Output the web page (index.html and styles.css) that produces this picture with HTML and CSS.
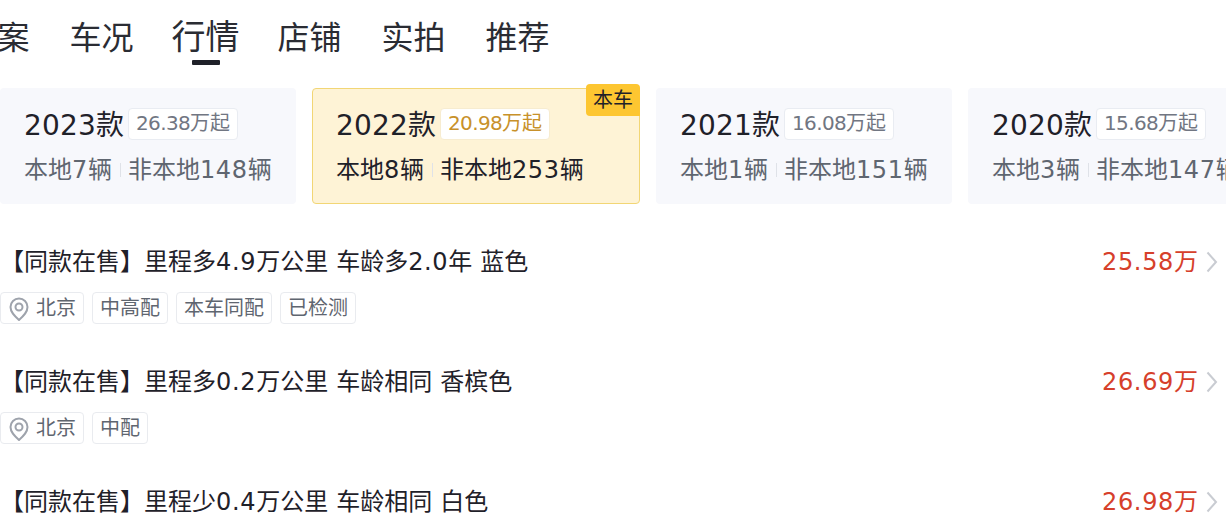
FILE: index.html
```html
<!DOCTYPE html>
<html lang="zh">
<head>
<meta charset="utf-8">
<title>行情</title>
<link rel="stylesheet" href="styles.css">
</head>
<body>
<nav class="tabs">
  <span class="tab">档案</span>
  <span class="tab">车况</span>
  <span class="tab active">行情</span>
  <span class="tab">店铺</span>
  <span class="tab">实拍</span>
  <span class="tab">推荐</span>
</nav>
<section class="years">
  <div class="year">
    <div class="year-head"><span class="year-name"><b class="n28">2023</b>款</span><span class="year-price"><b class="n20">26.38</b>万起</span></div>
    <div class="year-count"><span>本地<b class="n24">7</b>辆</span><i class="sep"></i><span>非本地<b class="n24">148</b>辆</span></div>
  </div>
  <div class="year current">
    <span class="badge">本车</span>
    <div class="year-head"><span class="year-name"><b class="n28">2022</b>款</span><span class="year-price"><b class="n20">20.98</b>万起</span></div>
    <div class="year-count"><span>本地<b class="n24">8</b>辆</span><i class="sep"></i><span>非本地<b class="n24">253</b>辆</span></div>
  </div>
  <div class="year">
    <div class="year-head"><span class="year-name"><b class="n28">2021</b>款</span><span class="year-price"><b class="n20">16.08</b>万起</span></div>
    <div class="year-count"><span>本地<b class="n24">1</b>辆</span><i class="sep"></i><span>非本地<b class="n24">151</b>辆</span></div>
  </div>
  <div class="year">
    <div class="year-head"><span class="year-name"><b class="n28">2020</b>款</span><span class="year-price"><b class="n20">15.68</b>万起</span></div>
    <div class="year-count"><span>本地<b class="n24">3</b>辆</span><i class="sep"></i><span>非本地<b class="n24">147</b>辆</span></div>
  </div>
</section>
<section class="list">
  <article class="item">
    <div class="item-top">
      <span class="item-title">【同款在售】里程多<b class="n24">4.9</b>万公里 车龄多<b class="n24">2.0</b>年 蓝色</span>
      <span class="item-price"><b class="n24">25.58</b>万<svg class="chev" viewBox="0 0 12 22"><path d="M1.500 1.500 10 11 1.500 20.500"/></svg></span>
    </div>
    <div class="tags">
      <span class="tag"><svg class="pin" viewBox="0 0 20 24"><path d="M10 23C5 18.500 1.500 15 1.500 10a8.500 8.500 0 0 1 17 0c0 5-3.500 8.500-8.500 13Z"/><circle cx="10" cy="10" r="3.500"/></svg>北京</span>
      <span class="tag">中高配</span>
      <span class="tag">本车同配</span>
      <span class="tag">已检测</span>
    </div>
  </article>
  <article class="item">
    <div class="item-top">
      <span class="item-title">【同款在售】里程多<b class="n24">0.2</b>万公里 车龄相同 香槟色</span>
      <span class="item-price"><b class="n24">26.69</b>万<svg class="chev" viewBox="0 0 12 22"><path d="M1.500 1.500 10 11 1.500 20.500"/></svg></span>
    </div>
    <div class="tags">
      <span class="tag"><svg class="pin" viewBox="0 0 20 24"><path d="M10 23C5 18.500 1.500 15 1.500 10a8.500 8.500 0 0 1 17 0c0 5-3.500 8.500-8.500 13Z"/><circle cx="10" cy="10" r="3.500"/></svg>北京</span>
      <span class="tag">中配</span>
    </div>
  </article>
  <article class="item">
    <div class="item-top">
      <span class="item-title">【同款在售】里程少<b class="n24">0.4</b>万公里 车龄相同 白色</span>
      <span class="item-price"><b class="n24">26.98</b>万<svg class="chev" viewBox="0 0 12 22"><path d="M1.500 1.500 10 11 1.500 20.500"/></svg></span>
    </div>
  </article>
</section>
</body>
</html>
```
FILE: styles.css
```css
* { box-sizing: border-box; }
html, body { margin: 0; height: 100%; }
body {
  width: 1226px;
  height: 518px;
  overflow: hidden;
  background: #fff;
  color: #1f2129;
  font-family: "DejaVu Sans", "Noto Sans CJK SC", sans-serif;
}
b { font-weight: 400; }
.n20 { letter-spacing: -0.65px; }
.n24 { letter-spacing: 0.66px; }
.n28 { letter-spacing: 0.19px; }
.tabs {
  display: flex;
  align-items: baseline;
  gap: 40px;
  height: 88px;
  margin-left: -34.5px;
  padding-top: 14px;
  font-size: 32px;
  line-height: 46px;
  color: #2a2c33;
}
.tab { position: relative; height: 46px; white-space: nowrap; }
.active { margin: 0 -2px; font-size: 34px; }
.active::after {
  content: "";
  position: absolute;
  left: 20.5px;
  top: 46px;
  width: 28px;
  height: 5px;
  border-radius: 1px;
  background: #1f2129;
}
.years { display: flex; gap: 16px; height: 116px; }
.year {
  position: relative;
  flex: none;
  width: 296px;
  height: 116px;
  padding: 20px 0 0 24px;
  border-radius: 4px;
  background: #f7f8fc;
  color: #5f6670;
  white-space: nowrap;
}
.current {
  width: 328px;
  background: #fef3d6;
  border: 1px solid #f2d675;
  padding: 19px 0 0 23px;
  color: #1f2129;
}
.year:last-child { width: 320px; }
.year-head { display: flex; align-items: center; height: 32px; gap: 4px; }
.year-name { font-size: 28px; line-height: 32px; padding-top: 4px; color: #1f2129; }
.year-price {
  height: 32px;
  padding: 0 7px;
  border: 1px solid #e9ecf2;
  border-radius: 4px;
  background: #fff;
  font-size: 20px;
  line-height: 28px;
  color: #717682;
}
.current .year-price { color: #c8912a; border-color: #f7ecd0; }
.year-count { display: flex; align-items: center; height: 34px; margin-top: 13px; font-size: 24px; line-height: 34px; }
.sep { width: 1px; height: 14px; margin: 0 7px 0 8px; background: #dfe2e8; }
.badge {
  position: absolute;
  right: -1px;
  top: -5px;
  width: 54px;
  height: 32px;
  border-radius: 4px 4px 0 4px;
  background: #fdc631;
  font-size: 20px;
  line-height: 32px;
  text-align: center;
  color: #1f2129;
}
.list { display: flex; flex-direction: column; gap: 0; }
.item { height: 120px; padding-top: 38px; }
.item-top { display: flex; justify-content: space-between; align-items: center; height: 40px; }
.item-title { font-size: 24px; line-height: 40px; word-spacing: 0.37px; color: #1f2129; white-space: nowrap; }
.item-price { display: flex; align-items: center; font-size: 24px; line-height: 40px; color: #d6402b; }
.chev { width: 12px; height: 22px; margin: 0 8px; fill: none; stroke: #c9ccd2; stroke-width: 2; }
.tags { display: flex; gap: 8px; margin-top: 10px; }
.tag {
  display: flex;
  align-items: center;
  height: 32px;
  padding: 0 7px 3px;
  border: 1px solid #e9ebef;
  border-radius: 4px;
  font-size: 20px;
  color: #5f6670;
  white-space: nowrap;
}
.pin { width: 20px; height: 24px; margin: 5px 7px 0 1px; fill: none; stroke: #9ea3ac; stroke-width: 2; }
```
